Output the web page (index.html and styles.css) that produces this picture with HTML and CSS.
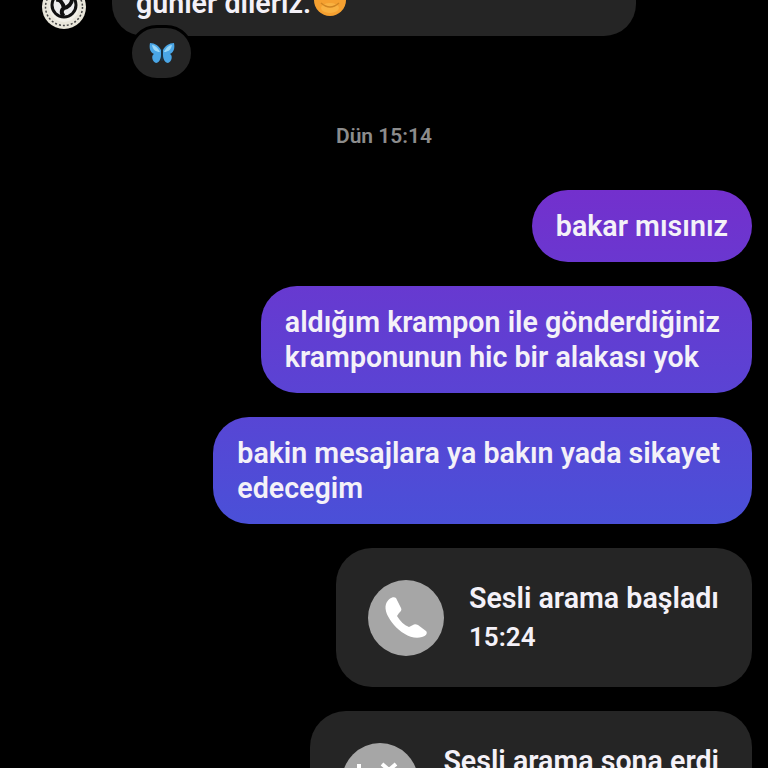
FILE: index.html
```html
<!DOCTYPE html>
<html lang="tr">
<head>
  <meta charset="UTF-8" />
  <meta name="viewport" content="width=device-width, initial-scale=1.0" />
  <title>Mesajlar</title>
  <link rel="stylesheet" href="styles.css">
</head>
<body>
<div class="chat">
  <div class="incoming">
    <div class="avatar">
      <svg viewBox="0 0 46 46" width="46" height="46">
        <circle cx="23" cy="23" r="22" fill="#e9e6da"/>
        <circle cx="23" cy="23" r="18.5" fill="none" stroke="#444" stroke-width="1.5" stroke-dasharray="2 2"/>
        <circle cx="23" cy="23" r="15" fill="#f2f0e8"/>
        <circle cx="23" cy="21" r="12" fill="#eee" stroke="#111" stroke-width="3"/>
        <path d="M15 16 C19 15 22 19 23 24 M31 15 C31 20 27 23 23 24 M23 24 C20 26 20 30 23 32" fill="none" stroke="#111" stroke-width="4"/>
      </svg>
    </div>
    <div class="incoming-body">
      <div class="bubble-in">
        <span>günler dileriz.</span><svg class="emoji" viewBox="0 0 34 34" width="34" height="34">
          <circle cx="17" cy="17" r="16" fill="#f5a030"/>
          <ellipse cx="17" cy="25" rx="9" ry="5" fill="#fbbd4c" opacity="0.6"/>
          <path d="M8 20 Q17 28 26 20" fill="none" stroke="#cf8422" stroke-width="1.5"/>
        </svg>
      </div>
      <div class="reaction">
        <svg viewBox="0 0 28 22" width="28" height="22">
          <path d="M13 8 C11 4 7 1 2 1 C1 6 2 10 6 12 C3 13 4 20 8 21 C11 21 13 17 13 13 Z" fill="#4aa6e6"/>
          <path d="M15 8 C17 4 21 1 26 1 C27 6 26 10 22 12 C25 13 24 20 20 21 C17 21 15 17 15 13 Z" fill="#4aa6e6"/>
          <path d="M4 3 C7 3 10 6 12 10 C8 10 5 8 4 3 Z M24 3 C21 3 18 6 16 10 C20 10 23 8 24 3 Z" fill="#9ad8f8"/>
          <rect x="13.2" y="7" width="1.6" height="12" rx="0.8" fill="#16364e"/>
        </svg>
      </div>
    </div>
  </div>

  <div class="time-label">Dün 15:14</div>

  <div class="outgoing">
    <div class="bubble-out">bakar mısınız</div>
    <div class="bubble-out bubble-wide">aldığım krampon ile gönderdiğiniz<br>kramponunun hic bir alakası yok</div>
    <div class="bubble-out bubble-wide">bakin mesajlara ya bakın yada sikayet<br>edecegim</div>

    <div class="call-card">
      <div class="call-icon">
        <svg viewBox="0 0 76 76" width="76" height="76">
          <path d="M18 24 C20 19 25 16 28 18 L33 28 C34 30 33 31 31 33 L29 36 C32 41 36 45 41 47 L45 45 C46 44 48 44 50 45 L58 51 C60 53 58 56 54 57 C44 60 33 53 26 45 C20 38 16 30 18 24 Z" fill="#fff"/>
        </svg>
      </div>
      <div class="call-text">
        <div>Sesli arama başladı</div>
        <div class="call-time">15:24</div>
      </div>
    </div>

    <div class="call-card">
      <div class="call-icon">
        <svg viewBox="0 0 76 76" width="76" height="76">
          <path d="M17 21 L17 30 M40 21 L47 27 L54 21" fill="none" stroke="#fff" stroke-width="4"/>
        </svg>
      </div>
      <div class="call-text">
        <div>Sesli arama sona erdi</div>
      </div>
    </div>
  </div>
</div>
</body>
</html>
```

FILE: styles.css
```css
html, body {
  margin: 0;
  height: 100%;
  background-color: #000;
  overflow: hidden;
}
.chat {
  height: 768px;
  overflow: hidden;
  font-family: Roboto, "Noto Sans", sans-serif;
  font-size: 28.6px;
  font-weight: 600;
  line-height: 35px;
  color: #f4f1f8;
}
.incoming {
  display: flex;
  align-items: flex-start;
  margin-top: -40px;
  padding-left: 41px;
  gap: 25px;
}
.avatar {
  width: 46px;
  height: 46px;
  margin-top: 24px;
}
.incoming-body {
  display: flex;
  flex-direction: column;
  align-items: flex-start;
}
.bubble-in {
  width: 524px;
  box-sizing: border-box;
  height: 76px;
  padding: 26px 24px 0;
  background-color: #252525;
  border-radius: 0 0 32px 32px;
  display: flex;
  align-items: flex-start;
}
.emoji {
  display: block;
  margin: -3px 0 0 2px;
}
.reaction {
  width: 59px;
  height: 50px;
  margin: -11px 0 0 17px;
  background-color: #252525;
  border-radius: 28px;
  border: 3px solid #000;
  display: flex;
  align-items: center;
  justify-content: center;
}
.time-label {
  margin-top: 40px;
  height: 30px;
  line-height: 30px;
  text-align: center;
  font-size: 21px;
  color: #8c8c8c;
}
.outgoing {
  margin-top: 39px;
  padding-right: 16px;
  display: flex;
  flex-direction: column;
  align-items: flex-end;
  gap: 24px;
}
.bubble-out {
  padding: 19px 24px 18px;
  border-radius: 36px;
  background: linear-gradient(#7330cd 190px, #4a50d8 524px) fixed;
}
.bubble-wide {
  padding-right: 32px;
}
.call-card {
  display: flex;
  align-items: center;
  gap: 25px;
  height: 139px;
  flex-shrink: 0;
  padding: 0 33px 0 32px;
  background-color: #252525;
  border-radius: 36px;
}
.call-icon {
  width: 76px;
  height: 76px;
  border-radius: 50%;
  background-color: #a6a6a6;
}
.call-text {
  min-height: 78px;
}
.call-text div {
  line-height: 39px;
}
.call-time {
  font-size: 26px;
}
```
